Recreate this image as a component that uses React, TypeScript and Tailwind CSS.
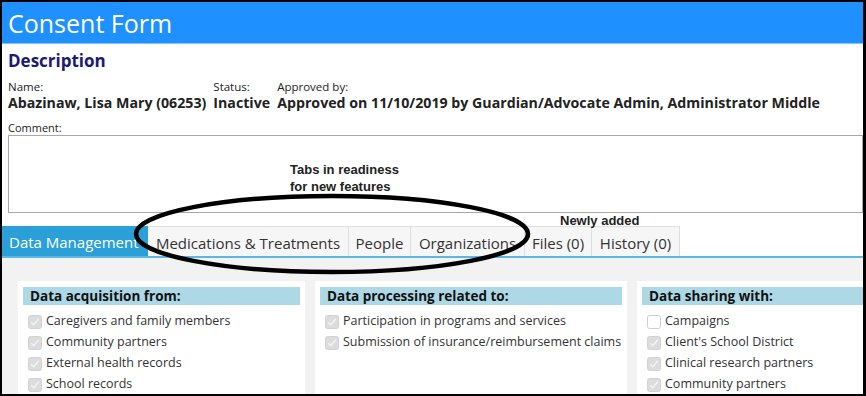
import React from 'react';

const FONT = { fontFamily: '"Open Sans", "Noto Sans", sans-serif' };

const tabs = [
  { label: 'Data Management', w: 146, active: true },
  { label: 'Medications & Treatments', w: 201 },
  { label: 'People', w: 62 },
  { label: 'Organizations', w: 114 },
  { label: 'Files (0)', w: 67 },
  { label: 'History (0)', w: 88 },
];

const sections = [
  {
    title: 'Data acquisition from:',
    w: 287,
    items: [
      { text: 'Caregivers and family members', on: true },
      { text: 'Community partners', on: true },
      { text: 'External health records', on: true },
      { text: 'School records', on: true },
    ],
  },
  {
    title: 'Data processing related to:',
    w: 312,
    items: [
      { text: 'Participation in programs and services', on: true },
      { text: 'Submission of insurance/reimbursement claims', on: true },
    ],
  },
  {
    title: 'Data sharing with:',
    w: 240,
    items: [
      { text: 'Campaigns', on: false },
      { text: "Client's School District", on: true },
      { text: 'Clinical research partners', on: true },
      { text: 'Community partners', on: true },
    ],
  },
];

const Check = ({ on }: { on: boolean }) =>
  on ? (
    <svg width="14" height="14" viewBox="0 0 14 14" className="shrink-0">
      <rect x="0.5" y="0.5" width="13" height="13" rx="2" fill="#dcdcdc" stroke="#d2d2d2" />
      <path d="M3.2 7.2 L5.8 9.8 L10.8 3.8" fill="none" stroke="#f4f4f4" strokeWidth="1.4" />
    </svg>
  ) : (
    <svg width="14" height="14" viewBox="0 0 14 14" className="shrink-0">
      <rect x="0.5" y="0.5" width="13" height="13" rx="2" fill="#ffffff" stroke="#cfcfcf" />
    </svg>
  );

export default function App() {
  return (
    <div
      className="relative w-[866px] h-[396px] overflow-hidden bg-white border-l-2 border-t-2 border-r-[3px] border-b-2 border-black flex flex-col"
      style={FONT}
    >
      {/* Title bar */}
      <div className="h-[42px] shrink-0 bg-[#1e90ff] border-b border-[#86c2ff] flex items-center px-[6px]">
        <span className="text-white text-[25px] leading-none mt-[2px]">Consent Form</span>
      </div>

      {/* Description */}
      <div className="pl-[6px] shrink-0">
        <div className="mt-[7px] text-[17px] leading-[20px] font-bold text-[#1b1b72]">Description</div>
        <div className="mt-[9px] flex gap-[7px] text-[#222]">
          <div>
            <div className="text-[11.5px] leading-[13px]">Name:</div>
            <div className="mt-[2px] text-[14.2px] leading-[16px] font-bold">Abazinaw, Lisa Mary (06253)</div>
          </div>
          <div>
            <div className="text-[11.5px] leading-[13px]">Status:</div>
            <div className="mt-[2px] text-[14.2px] leading-[16px] font-bold">Inactive</div>
          </div>
          <div>
            <div className="text-[11.5px] leading-[13px]">Approved by:</div>
            <div className="mt-[2px] text-[14.2px] leading-[16px] font-bold whitespace-nowrap">
              Approved on 11/10/2019 by Guardian/Advocate Admin, Administrator Middle
            </div>
          </div>
        </div>
        <div className="mt-[10px] text-[11px] leading-[13px] text-[#222]">Comment:</div>
        <div className="mt-[1px] h-[78px] border border-[#a8a8a8]" />
      </div>

      {/* Tabs */}
      <div className="mt-[13px] shrink-0 flex h-[32px] border-b-2 border-[#5cb6e6]">
        {tabs.map((t) => (
          <div
            key={t.label}
            className={
              t.active
                ? 'h-full flex items-center pl-[7px] pt-[3px] bg-[#2a9fd8] text-white text-[15px] whitespace-nowrap overflow-hidden'
                : 'h-full flex items-center justify-center pt-[3px] bg-[#f6f6f6] border-t border-r border-[#dedede] text-[#333] text-[15px] whitespace-nowrap'
            }
            style={{ width: t.w }}
          >
            {t.label}
          </div>
        ))}
      </div>

      {/* Panel */}
      <div className="flex-1 bg-[#f2f2f2] pl-[16px] pt-[23px] flex gap-[10px]">
        {sections.map((s) => (
          <div key={s.title} className="bg-white shrink-0 px-[5px] pt-[6px]" style={{ width: s.w }}>
            <div className="h-[18px] bg-[#add8e6] pl-[7px] text-[13.5px] leading-[19px] font-bold text-[#111] whitespace-nowrap">
              {s.title}
            </div>
            <div className="mt-[6px] pl-[5px]">
              {s.items.map((it) => (
                <div key={it.text} className="h-[21px] flex items-center gap-[4px] text-[12.5px] text-[#333] whitespace-nowrap">
                  <Check on={it.on} />
                  <span>{it.text}</span>
                </div>
              ))}
            </div>
          </div>
        ))}
      </div>

      {/* Annotations */}
      <div
        className="absolute left-[288px] top-[159px] text-[13px] leading-[17px] font-bold text-[#222]"
        style={{ fontFamily: '"Liberation Sans", Arial, sans-serif' }}
      >
        <div>Tabs in readiness</div>
        <div>for new features</div>
      </div>
      <div
        className="absolute left-[558px] top-[210px] text-[13px] leading-[17px] font-bold text-[#222]"
        style={{ fontFamily: '"Liberation Sans", Arial, sans-serif' }}
      >
        Newly added
      </div>
      <svg className="absolute left-0 top-0 pointer-events-none" width="866" height="396">
        <ellipse cx="330" cy="232" rx="196" ry="38" fill="none" stroke="#000" strokeWidth="4.5" />
      </svg>
    </div>
  );
}
